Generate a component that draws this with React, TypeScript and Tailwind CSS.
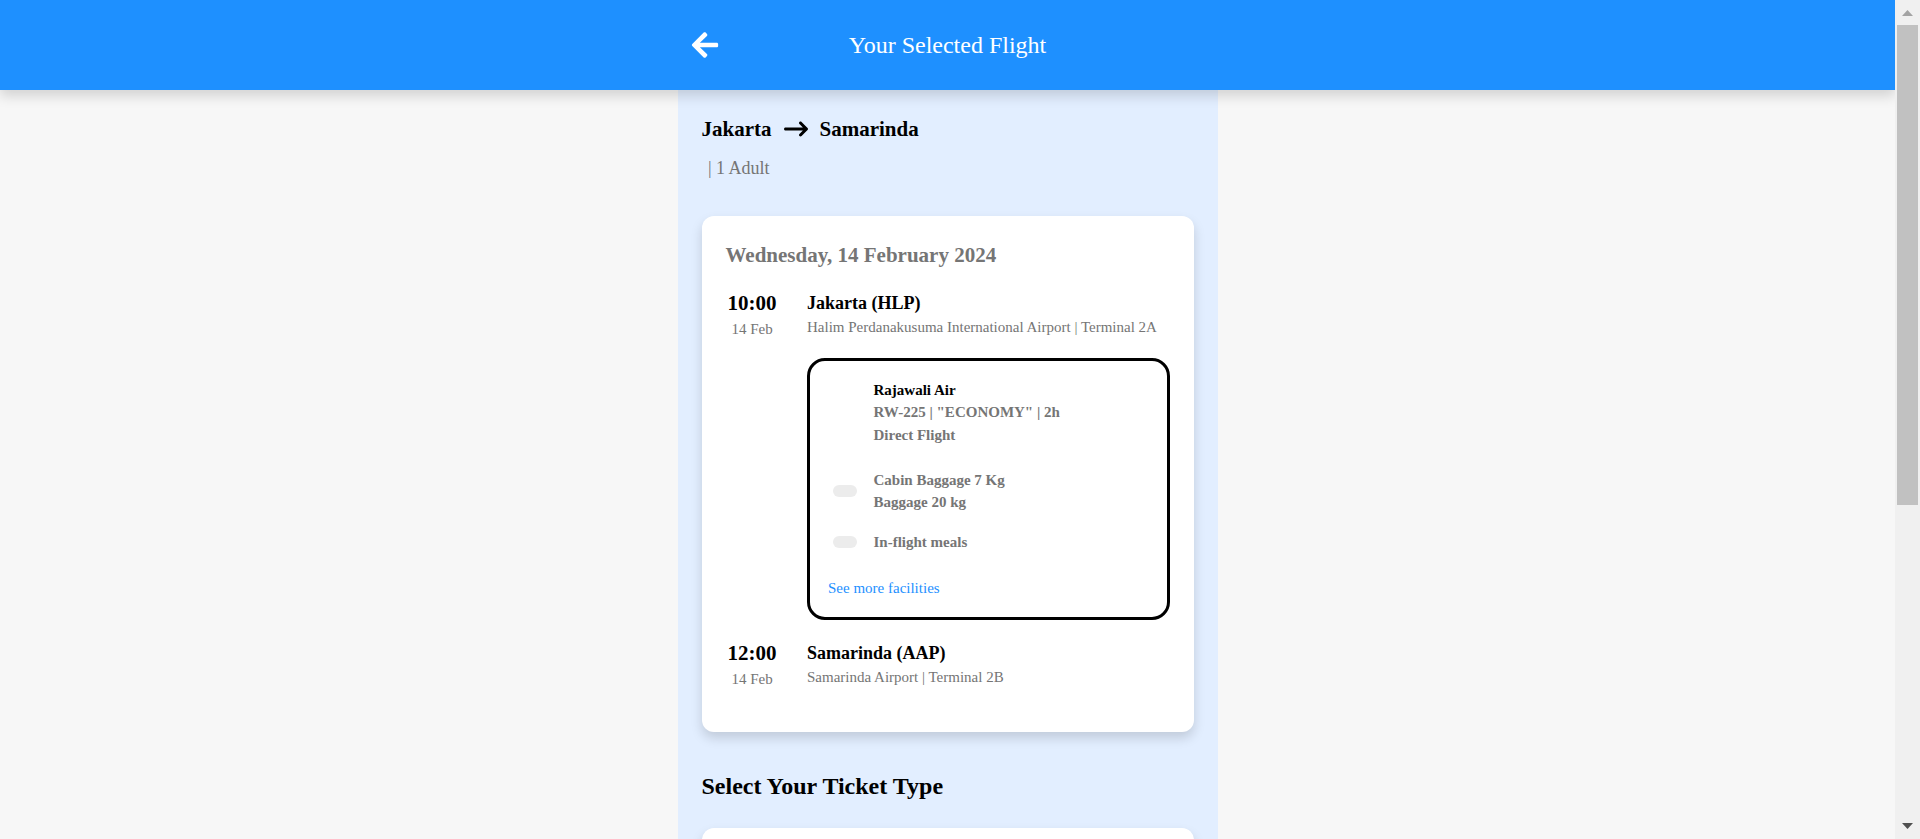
import type { ReactNode } from "react";
import { FaArrowLeft } from "react-icons/fa";
import { FaArrowRightLong } from "react-icons/fa6";

function Stop({ time, date, city, place }: { time: string; date: string; city: string; place: string }) {
  return (
    <div className="flex">
      <div className="flex w-[81px] flex-col">
        <div className="w-[53px] text-center text-[21px] leading-[24px] font-bold text-black">{time}</div>
        <div className="mt-[4px] w-[53px] text-center text-[15px] leading-[20px]">{date}</div>
      </div>
      <div className="flex flex-col pl-[0.5px] whitespace-nowrap">
        <div className="text-[18px] leading-[24px] font-bold text-black">{city}</div>
        <div className="mt-[2px] text-[15px] leading-[20px]">{place}</div>
      </div>
    </div>
  );
}

function Facility({ children }: { children: ReactNode }) {
  return (
    <div className="flex items-center">
      <div className="ml-[5px] h-3 w-6 rounded-full bg-[#ececec]" />
      <div className="ml-[17px] leading-[22px]">{children}</div>
    </div>
  );
}

function Scrollbar() {
  return (
    <div className="flex w-[25px] shrink-0 flex-col items-center justify-between bg-[#f0f0f0]">
      <div className="flex w-full flex-col items-center">
        <svg className="mt-[10px] mr-px h-[6px] w-[11px]" viewBox="0 0 11 6">
          <path d="M0 6 5.5 0 11 6Z" fill="#a3a3a3" />
        </svg>
        <div className="mt-[9px] h-[480px] w-[21px] bg-[#c1c1c1]" />
      </div>
      <svg className="mr-px mb-[10px] h-[6px] w-[11px]" viewBox="0 0 11 6">
        <path d="M0 0H11L5.5 6Z" fill="#505050" />
      </svg>
    </div>
  );
}

export default function App() {
  return (
    <div className="flex h-[839px] overflow-hidden bg-[#f7f7f7] font-['Liberation_Serif',serif] text-[#757575]">
      <div className="flex min-w-0 flex-1 flex-col overflow-hidden">
        <header className="relative z-10 flex h-[90px] shrink-0 justify-center bg-[#1e90ff] text-white shadow-[0_6px_12px_rgba(0,0,0,0.15)]">
          <div className="grid w-[540px] grid-cols-[1fr_auto_1fr] items-center">
            <FaArrowLeft className="ml-[12px] size-[30px]" />
            <h1 className="text-[24px] leading-[30px]">Your Selected Flight</h1>
          </div>
        </header>
        <main className="mx-auto w-[540px] flex-1 bg-[#e2eeff] px-6">
          <div className="mt-[27px] flex h-6 items-center text-[21px] leading-6 font-bold text-black">
            <span>Jakarta</span>
            <FaArrowRightLong className="mx-3 size-6" />
            <span>Samarinda</span>
          </div>
          <div className="mt-[15px] pl-[6.5px] text-[18px] leading-6">| 1 Adult</div>
          <section className="mt-[36px] h-[516px] rounded-xl bg-white px-6 pt-[27px] shadow-[0_6px_12px_rgba(0,0,0,0.15)]">
            <h2 className="text-[21px] leading-6 font-bold">Wednesday, 14 February 2024</h2>
            <div className="mt-[24px]">
              <Stop time="10:00" date="14 Feb" city="Jakarta (HLP)" place="Halim Perdanakusuma International Airport | Terminal 2A" />
            </div>
            <div className="mt-[19px] ml-[81px] h-[262px] rounded-[18px] border-[3px] border-black px-[18px] pt-[18px] text-[15px] font-bold">
              <div className="ml-[46px] leading-[22.5px]">
                <div className="text-black">Rajawali Air</div>
                <div className="-mt-px">RW-225 | "ECONOMY" | 2h</div>
                <div className="mt-px">Direct Flight</div>
              </div>
              <div className="mt-[22px]">
                <Facility>
                  <div>Cabin Baggage 7 Kg</div>
                  <div>Baggage 20 kg</div>
                </Facility>
              </div>
              <div className="mt-[18px]">
                <Facility>In-flight meals</Facility>
              </div>
              <div className="mt-[24px] ml-[0.5px] leading-[22px] font-normal text-[#1e90ff]">See more facilities</div>
            </div>
            <div className="mt-[21px]">
              <Stop time="12:00" date="14 Feb" city="Samarinda (AAP)" place="Samarinda Airport | Terminal 2B" />
            </div>
          </section>
          <h2 className="mt-[39px] text-[24px] leading-[30px] font-bold text-black">Select Your Ticket Type</h2>
          <section className="mt-[27px] h-[200px] rounded-xl bg-white shadow-[0_6px_12px_rgba(0,0,0,0.15)]" />
        </main>
      </div>
      <Scrollbar />
    </div>
  );
}
